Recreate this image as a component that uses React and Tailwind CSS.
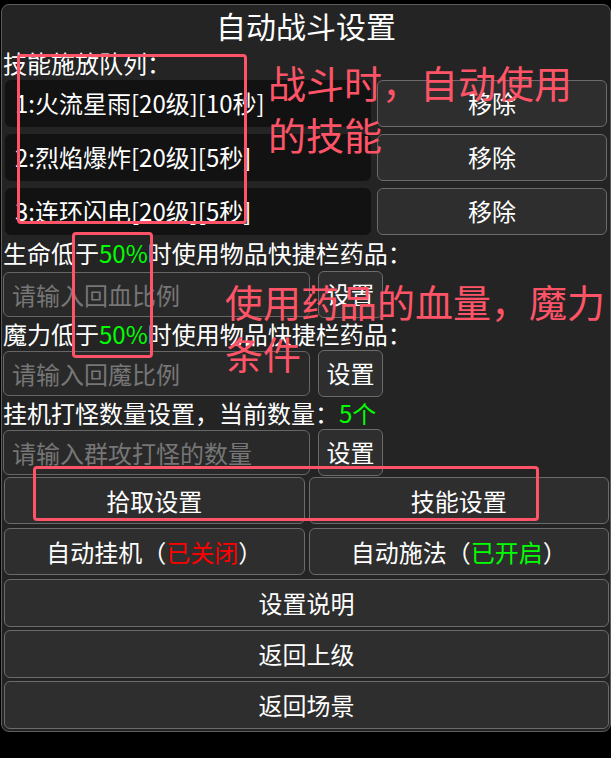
import React from 'react';

const Btn = ({ children, className = '' }) => (
  <button
    type="button"
    className={`flex items-center justify-center rounded-[6px] border border-[#6b6b6b] bg-[#2e2e2e] text-[24px] leading-none text-white ${className}`}
  >
    {children}
  </button>
);

const InputRow = ({ placeholder }) => (
  <div className="flex h-[48px] items-center gap-[8px]">
    <input
      type="text"
      placeholder={placeholder}
      className="h-[45px] w-[307px] rounded-[6px] border border-[#666] bg-[#292929] px-[8px] text-[24px] text-white outline-none placeholder:text-[#767676]"
    />
    <Btn className="h-[47px] w-[65px]">设置</Btn>
  </div>
);

const skills = ['1:火流星雨[20级][10秒]', '2:烈焰爆炸[20级][5秒]', '3:连环闪电[20级][5秒]'];

export default function App() {
  return (
    <div className="relative min-h-[758px] w-[611px] bg-black pl-[1px] pt-[4px] font-['Noto_Sans_CJK_SC',sans-serif] text-white">
      <div className="rounded-[8px] border border-[#5c5c5c] bg-[#242424] px-[1px] pb-[2px]">
        <div className="text-center text-[30px] leading-[41px]">自动战斗设置</div>
        <div className="text-[24px] leading-[33px]">技能施放队列：</div>

        <div className="mt-[1px] flex flex-col gap-[7px]">
          {skills.map((s) => (
            <div key={s} className="flex h-[47px] gap-[6px]">
              <div className="ml-[2px] flex w-[366px] items-center rounded-[6px] bg-[#121212] pb-[2px] pl-[10px] text-[24px]">
                {s}
              </div>
              <Btn className="h-[47px] w-[230px] pb-[2px]">移除</Btn>
            </div>
          ))}
        </div>

        <div className="mt-[1px] text-[24px] leading-[34px]">
          生命低于<span className="text-[#00ff00]">50%</span>时使用物品快捷栏药品：
        </div>
        <InputRow placeholder="请输入回血比例" />
        <div className="text-[24px] leading-[31px]">
          魔力低于<span className="text-[#00ff00]">50%</span>时使用物品快捷栏药品：
        </div>
        <InputRow placeholder="请输入回魔比例" />
        <div className="text-[24px] leading-[31px]">
          挂机打怪数量设置，当前数量：<span className="text-[#00ff00]">5个</span>
        </div>
        <InputRow placeholder="请输入群攻打怪的数量" />

        <div className="ml-[1px] mt-[1px] flex flex-col gap-[4px]">
          <div className="grid grid-cols-2 gap-[4px]">
            <Btn className="h-[47px]">拾取设置</Btn>
            <Btn className="h-[47px]">技能设置</Btn>
          </div>
          <div className="grid grid-cols-2 gap-[4px]">
            <Btn className="h-[47px]">
              自动挂机（<span className="text-[#ff0000]">已关闭</span>）
            </Btn>
            <Btn className="h-[47px]">
              自动施法（<span className="text-[#00ff00]">已开启</span>）
            </Btn>
          </div>
          <div className="flex flex-col gap-[3px]">
            <Btn className="h-[48px]">设置说明</Btn>
            <Btn className="h-[48px]">返回上级</Btn>
            <Btn className="h-[48px]">返回场景</Btn>
          </div>
        </div>
      </div>

      {/* annotations */}
      <div className="absolute left-[17px] top-[54px] h-[170px] w-[230px] rounded-[4px] border-[3px] border-[#ff5468]" />
      <div className="absolute left-[268px] top-[56px] text-[38px] leading-[52px] text-[#ff5468]">
        战斗时，自动使用
        <br />
        的技能
      </div>
      <div className="absolute left-[72px] top-[232px] h-[126px] w-[81px] rounded-[4px] border-[3px] border-[#ff5468]" />
      <div className="absolute left-[225px] top-[275px] text-[38px] leading-[52px] text-[#ff5468]">
        使用药品的血量，魔力
        <br />
        条件
      </div>
      <div className="absolute left-[33px] top-[466px] h-[55px] w-[506px] rounded-[4px] border-[3px] border-[#ff5468]" />
    </div>
  );
}
